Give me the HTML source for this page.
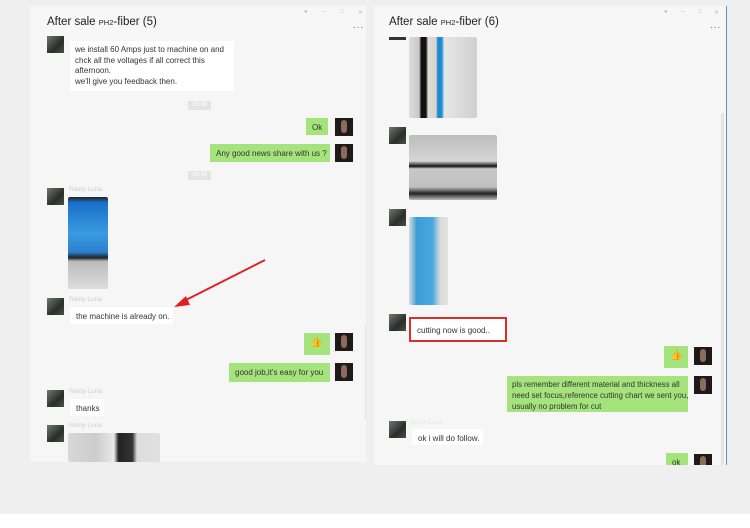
<!DOCTYPE html>
<html><head><meta charset="utf-8"><style>
*{margin:0;padding:0;box-sizing:border-box}
body{width:750px;height:528px;background:#fff;position:relative;overflow:hidden;font-family:"Liberation Sans",sans-serif;color:#333}
.bg{position:absolute;left:0;top:0;width:750px;height:514px;background:#efefef}
.p{position:absolute;background:#f6f6f6;overflow:hidden}
.a{position:absolute}
.hd{position:absolute;left:0;top:0;right:0;height:31px;background:#f7f7f7}
.t{position:absolute;top:10px;font-size:11.5px;color:#222}
.t small{font-size:7.5px}
.ctl{position:absolute;top:3px;font-size:6px;color:#bbb}
.dots{position:absolute;top:14px;font-size:10px;color:#777;letter-spacing:1px}
.av{position:absolute;width:17px;height:17px;background:linear-gradient(135deg,#6d7a70,#2a2e2a 60%,#4a4f48)}
.me{position:absolute;width:18px;height:18px;background:#1d1a18}
.me:after{content:"";position:absolute;left:6px;top:2px;width:6px;height:13px;background:#8a6b5d;border-radius:3px}
.b,.g{position:absolute;background:#fff;font-size:8px;line-height:11px;padding:4px 6px;color:#333;white-space:nowrap}
.g{background:#a5e37c}
.n{position:absolute;font-size:6.5px;color:#ccc}
.ts{position:absolute;width:23px;height:9px;background:#e4e4e4;font-size:6px;color:#fff;text-align:center;line-height:9px}
.im{position:absolute;border-radius:2px}
</style></head><body>
<div class="bg"></div>

<div class="p" style="left:30px;top:6px;width:336px;height:456px">
<div class="hd"></div>
<div class="t" style="left:17px">After sale <small>PH2</small>-fiber (5)</div>
<div class="ctl" style="left:274px">●</div><div class="ctl" style="left:292px">–</div><div class="ctl" style="left:310px">□</div><div class="ctl" style="left:328px">✕</div>
<div class="dots" style="left:323px">...</div>
<div class="av" style="left:17px;top:30px"></div>
<div class="b" style="left:40px;top:35px;width:164px;height:50px;padding:4px 5px;line-height:10.5px">we install 60 Amps just to machine on and<br>chck all the voltages if all correct this<br>afternoon.<br>we'll give you feedback then.</div>
<div class="ts" style="left:158px;top:95px">15:38</div>
<div class="g" style="left:276px;top:112px;width:22px;height:17px">Ok</div>
<div class="me" style="left:305px;top:112px"></div>
<div class="g" style="left:180px;top:138px;width:120px;height:18px">Any good news share with us ?</div>
<div class="me" style="left:305px;top:138px"></div>
<div class="ts" style="left:158px;top:165px">16:10</div>
<div class="n" style="left:39px;top:180px">Resty Luna</div>
<div class="av" style="left:17px;top:182px"></div>
<div class="im" style="left:38px;top:191px;width:40px;height:92px;background:linear-gradient(#222 0,#1a6fc8 6%,#3a9be0 40%,#2a80d0 60%,#222 66%,#bbb 70%,#ddd 100%)"></div>
<div class="n" style="left:39px;top:290px">Resty Luna</div>
<div class="av" style="left:17px;top:292px"></div>
<div class="b" style="left:40px;top:301px;width:103px;height:17px">the machine is already on.</div>
<div class="g" style="left:274px;top:327px;width:26px;height:22px;font-size:10px">👍</div>
<div class="me" style="left:305px;top:327px"></div>
<div class="g" style="left:199px;top:357px;width:101px;height:19px">good job,it's easy for you</div>
<div class="me" style="left:305px;top:357px"></div>
<div class="n" style="left:39px;top:382px">Resty Luna</div>
<div class="av" style="left:17px;top:384px"></div>
<div class="b" style="left:40px;top:393px;width:34px;height:17px">thanks</div>
<div class="n" style="left:39px;top:416px">Resty Luna</div>
<div class="av" style="left:17px;top:419px"></div>
<div class="im" style="left:38px;top:427px;width:92px;height:29px;background:linear-gradient(90deg,#d8d8d8,#ccc 30%,#e8e8e8 50%,#222 55%,#333 70%,#ddd 75%,#e0e0e0)"></div>
<div class="a" style="left:335px;top:319px;width:2px;height:95px;background:#e6e6e6"></div>
</div>
<svg class="a" style="left:0;top:0" width="750" height="528"><line x1="265" y1="260" x2="182" y2="302" stroke="#e02020" stroke-width="2"/><polygon points="174,307 186,296 190,305" fill="#e02020"/></svg>

<div class="p" style="left:374px;top:6px;width:352px;height:459px">
<div class="hd"></div>
<div class="t" style="left:15px">After sale <small>PH2</small>-fiber (6)</div>
<div class="ctl" style="left:290px">●</div><div class="ctl" style="left:307px">–</div><div class="ctl" style="left:324px">□</div><div class="ctl" style="left:340px">✕</div>
<div class="dots" style="left:336px">...</div>
<div class="a" style="left:15px;top:31px;width:17px;height:3px;background:#333"></div>
<div class="im" style="left:35px;top:31px;width:68px;height:81px;background:linear-gradient(90deg,#ddd,#c8c8c8 15%,#111 18%,#111 25%,#e0dcd6 28%,#d8d4cc 40%,#1e8ad0 42%,#1e8ad0 48%,#e6e6e6 52%,#d0d0d0)"></div>
<div class="av" style="left:15px;top:121px"></div>
<div class="im" style="left:35px;top:129px;width:88px;height:65px;background:linear-gradient(#bdbdbd,#d6d6d6 40%,#111 48%,#c8c8c8 52%,#c0c0c0 80%,#222 90%,#bbb)"></div>
<div class="av" style="left:15px;top:203px"></div>
<div class="im" style="left:35px;top:211px;width:39px;height:88px;background:linear-gradient(90deg,#dcdcdc,#3d9ed6 20%,#46a8de 60%,#dadada 80%,#e2e2e2)"></div>
<div class="av" style="left:15px;top:308px"></div>
<div class="b" style="left:35px;top:311px;width:98px;height:25px;border:2px solid #d9302a;padding:6px 6px">cutting now is good..</div>
<div class="g" style="left:290px;top:340px;width:24px;height:22px;font-size:10px">👍</div>
<div class="me" style="left:320px;top:341px"></div>
<div class="g" style="left:133px;top:370px;width:181px;height:36px;padding:3px 5px;font-size:7.8px">pls remember different material and thickness all<br>need set focus,reference cutting chart we sent you,<br>usually no problem for cut</div>
<div class="me" style="left:320px;top:370px"></div>
<div class="n" style="left:36px;top:413px;color:#e6e6e6">Resty Luna</div>
<div class="av" style="left:15px;top:415px"></div>
<div class="b" style="left:38px;top:423px;width:71px;height:16px">ok i will do follow.</div>
<div class="g" style="left:292px;top:447px;width:22px;height:14px">ok</div>
<div class="me" style="left:320px;top:448px"></div>
<div class="a" style="left:347px;top:107px;width:3px;height:352px;background:#e4e4e4"></div>
</div>
<div class="a" style="left:726px;top:6px;width:1px;height:459px;background:#5b8fc8"></div>
</body></html>
